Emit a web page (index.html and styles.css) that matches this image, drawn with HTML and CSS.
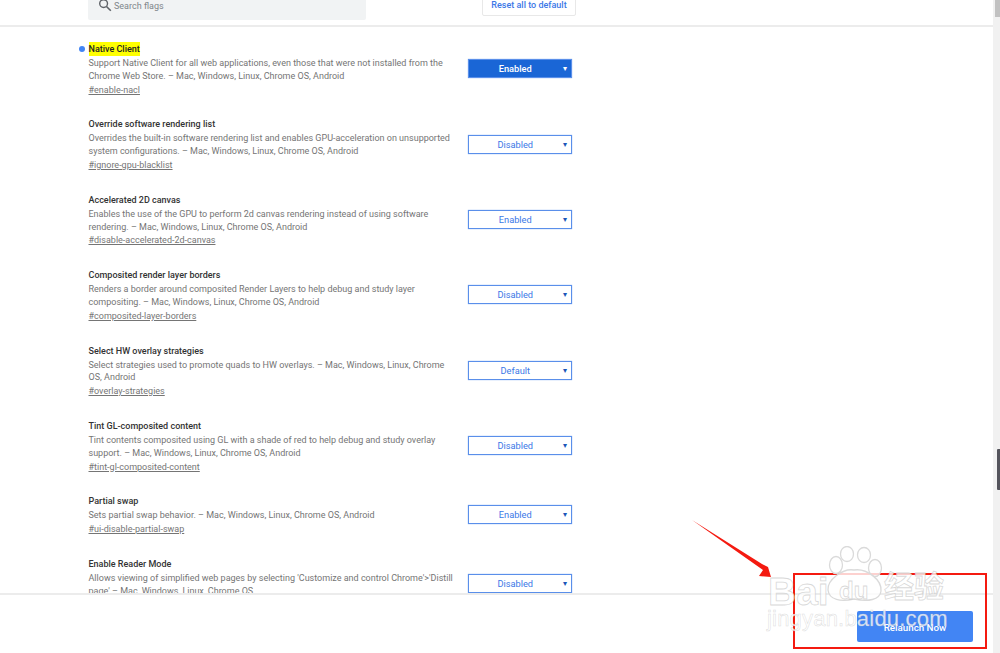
FILE: index.html
```html
<!DOCTYPE html>
<html lang="en">
<head>
<meta charset="utf-8">
<title>Flags</title>
<link rel="stylesheet" href="styles.css">
</head>
<body>
<div class="app">
  <div class="page">
    <header class="header">
      <div class="search">
        <svg class="search-icon" viewBox="0 0 14 14" width="14" height="14"><circle cx="5.6" cy="5.6" r="3.9" fill="none" stroke="#5f6368" stroke-width="1.4"/><path d="M8.5 8.5 L12.8 12.8" stroke="#5f6368" stroke-width="1.6"/></svg>
        <span class="search-text">Search flags</span>
      </div>
      <button class="reset">Reset all to default</button>
    </header>
    <main class="list">
      <section class="row">
        <div class="info">
          <h2 class="title"><span class="dot"></span><mark class="hit">Native Client</mark></h2>
          <p class="desc">Support Native Client for all web applications, even those that were not installed from the Chrome Web Store. – Mac, Windows, Linux, Chrome OS, Android</p>
          <a class="link">#enable-nacl</a>
        </div>
        <div class="select on"><span class="val">Enabled</span><span class="caret">▾</span></div>
      </section>
      <section class="row">
        <div class="info">
          <h2 class="title">Override software rendering list</h2>
          <p class="desc">Overrides the built-in software rendering list and enables GPU-acceleration on unsupported system configurations. – Mac, Windows, Linux, Chrome OS, Android</p>
          <a class="link">#ignore-gpu-blacklist</a>
        </div>
        <div class="select"><span class="val">Disabled</span><span class="caret">▾</span></div>
      </section>
      <section class="row">
        <div class="info">
          <h2 class="title">Accelerated 2D canvas</h2>
          <p class="desc">Enables the use of the GPU to perform 2d canvas rendering instead of using software rendering. – Mac, Windows, Linux, Chrome OS, Android</p>
          <a class="link">#disable-accelerated-2d-canvas</a>
        </div>
        <div class="select"><span class="val">Enabled</span><span class="caret">▾</span></div>
      </section>
      <section class="row">
        <div class="info">
          <h2 class="title">Composited render layer borders</h2>
          <p class="desc">Renders a border around composited Render Layers to help debug and study layer compositing. – Mac, Windows, Linux, Chrome OS, Android</p>
          <a class="link">#composited-layer-borders</a>
        </div>
        <div class="select"><span class="val">Disabled</span><span class="caret">▾</span></div>
      </section>
      <section class="row">
        <div class="info">
          <h2 class="title">Select HW overlay strategies</h2>
          <p class="desc">Select strategies used to promote quads to HW overlays. – Mac, Windows, Linux, Chrome OS, Android</p>
          <a class="link">#overlay-strategies</a>
        </div>
        <div class="select"><span class="val">Default</span><span class="caret">▾</span></div>
      </section>
      <section class="row">
        <div class="info">
          <h2 class="title">Tint GL-composited content</h2>
          <p class="desc">Tint contents composited using GL with a shade of red to help debug and study overlay support. – Mac, Windows, Linux, Chrome OS, Android</p>
          <a class="link">#tint-gl-composited-content</a>
        </div>
        <div class="select"><span class="val">Disabled</span><span class="caret">▾</span></div>
      </section>
      <section class="row">
        <div class="info">
          <h2 class="title">Partial swap</h2>
          <p class="desc">Sets partial swap behavior. – Mac, Windows, Linux, Chrome OS, Android</p>
          <a class="link">#ui-disable-partial-swap</a>
        </div>
        <div class="select"><span class="val">Enabled</span><span class="caret">▾</span></div>
      </section>
      <section class="row">
        <div class="info">
          <h2 class="title">Enable Reader Mode</h2>
          <p class="desc">Allows viewing of simplified web pages by selecting 'Customize and control Chrome'&gt;'Distill page' – Mac, Windows, Linux, Chrome OS</p>
          <a class="link">#enable-reader-mode</a>
        </div>
        <div class="select"><span class="val">Disabled</span><span class="caret">▾</span></div>
      </section>
    </main>
    <footer class="footer">
      <button class="relaunch">Relaunch Now</button>
    </footer>
  </div>
  <div class="scrollbar">
    <div class="thumb-top"></div>
    <div class="thumb-dark"></div>
  </div>
</div>

<svg class="arrow" viewBox="0 0 90 70" width="90" height="70"><polygon points="2,0 72,44 78,47 81,57 69,56 73,50" fill="#f41a10"/></svg>
<div class="redbox"></div>

<div class="watermark">
  <svg class="paw" viewBox="0 0 64 60" width="64" height="60">
    <g fill="#fff" fill-opacity=".8" stroke="#dadada" stroke-width="1.3">
      <ellipse cx="13" cy="19" rx="6.5" ry="8.5"/>
      <ellipse cx="24" cy="8" rx="6.5" ry="7.5"/>
      <ellipse cx="41" cy="9" rx="6.5" ry="7.5"/>
      <ellipse cx="52" cy="22" rx="6.5" ry="8.5"/>
      <path d="M5 44 C4 34 20 22 31 24 C44 22 59 34 58 45 C57 54 45 56 31 53 C18 56 6 54 5 44 Z"/>
    </g>
  </svg>
  <span class="wm-logo">Bai</span><span class="wm-du">du</span><span class="wm-cn">经验</span>
  <span class="wm-url">jingyan.baidu.com</span>
</div>
</body>
</html>
```
FILE: styles.css
```css
* { box-sizing: border-box; }
html, body { margin: 0; height: 100%; overflow: hidden; background: #fff; }
body { font-family: Roboto, "Liberation Sans", sans-serif; color: #333; position: relative; }

.app { display: flex; height: 653px; width: 1000px; }
.page { flex: 1; min-width: 0; display: flex; flex-direction: column; }

.header {
  height: 27px; flex: none; overflow: hidden; display: flex; align-items: flex-end;
  padding: 0 0 5px 88px; border-bottom: 2px solid #ececec; position: relative;
}
.search {
  width: 278px; height: 40px; flex: none; background: #f1f3f4; border-radius: 2px;
  display: flex; align-items: flex-end; padding: 0 0 8px 10px; gap: 2px;
  color: #80868b; font-size: 9px; line-height: 14px;
}
.search-icon { flex: none; }
.search-text { margin-bottom: -1px; }
.reset {
  margin: 0 0 4px 116px; width: 94px; height: 32px; flex: none; padding: 0 0 3px;
  display: flex; align-items: flex-end; justify-content: center;
  background: #fff; border: 1px solid #e8e8e8; border-radius: 2px;
  color: #3b78e7; font: 500 9px/13px Roboto, sans-serif;
}

.list { flex: 1; min-height: 0; overflow: hidden; padding: 14px 0 0 88.5px; }
.row { display: flex; align-items: center; width: 484px; height: 55.6px; margin-bottom: 19.8px; }
.row:nth-child(7) { height: 42.8px; }
.info { width: 365px; flex: none; }
.title { margin: 0; font-size: 9px; line-height: 16px; font-weight: 500; color: #333; position: relative; }
.hit { background: #ff0; color: #222; padding: 2px 0; }
.dot { position: absolute; left: -9.5px; top: 5px; width: 6px; height: 6px; border-radius: 50%; background: #4285f4; }
.desc { margin: 0; font-size: 9px; line-height: 12.8px; color: #757575; }
.link { display: block; font-size: 9px; line-height: 14px; color: #757575; text-decoration: underline; }

.select {
  margin-left: 14px; width: 104.5px; height: 19px; flex: none; display: flex; align-items: center;
  position: relative; background: #fff; border: 1px solid #5a8fea; color: #3b78e7;
  font-size: 9.25px; padding-right: 9px; box-shadow: 0 0 1px #7aa5f0;
}
.select.on { background: #1a66d6; color: #fff; font-weight: 500; }
.val { flex: 1; text-align: center; }
.caret { position: absolute; right: 4px; top: 2px; font-size: 8px; line-height: 13px; color: #1a56b8; }
.select.on .caret { color: #fff; }

.footer {
  height: 60px; flex: none; border-top: 2px solid #ececec; background: #fff;
  display: flex; justify-content: flex-end; align-items: flex-start; padding: 16px 20px 0 0;
}
.relaunch {
  width: 116px; height: 31px; border: 0; border-radius: 2px; background: #4285f4; color: #fff;
  font: 500 9.75px/13px Roboto, sans-serif; padding: 1px 0 0;
}

.scrollbar { width: 7px; flex: none; background: #f1f1f1; position: relative; }
.thumb-top { position: absolute; right: 0; top: 0; width: 5px; height: 17px; background: #c1c1c1; }
.thumb-dark { position: absolute; right: 0; top: 449px; width: 3px; height: 41px; background: #54545c; border-radius: 1px 0 0 1px; }

.watermark { position: absolute; left: 767px; top: 544px; width: 190px; height: 92px; pointer-events: none; }
.paw { position: absolute; left: 56px; top: 2px; }
.wm-logo, .wm-du, .wm-cn, .wm-url {
  position: absolute; color: rgba(255,255,255,.8); -webkit-text-stroke: .8px rgba(190,190,190,.6);
  font-family: "Liberation Sans", "Noto Sans CJK SC", sans-serif;
}
.wm-logo { left: 1px; top: 26px; font-size: 39px; line-height: 44px; font-weight: 700; }
.wm-du { left: 72px; top: 33px; font-size: 24px; line-height: 28px; font-weight: 700; }
.wm-cn { left: 117px; top: 25px; font-size: 30px; line-height: 36px; font-weight: 700; }
.wm-url { left: 0; top: 62px; font-size: 22px; line-height: 26px; letter-spacing: .2px; -webkit-text-stroke: .5px rgba(190,190,190,.55); white-space: nowrap; }

.arrow { position: absolute; left: 690px; top: 520px; }
.redbox { position: absolute; left: 793px; top: 573px; width: 194px; height: 76px; border: 2px solid #f41a10; }
```
